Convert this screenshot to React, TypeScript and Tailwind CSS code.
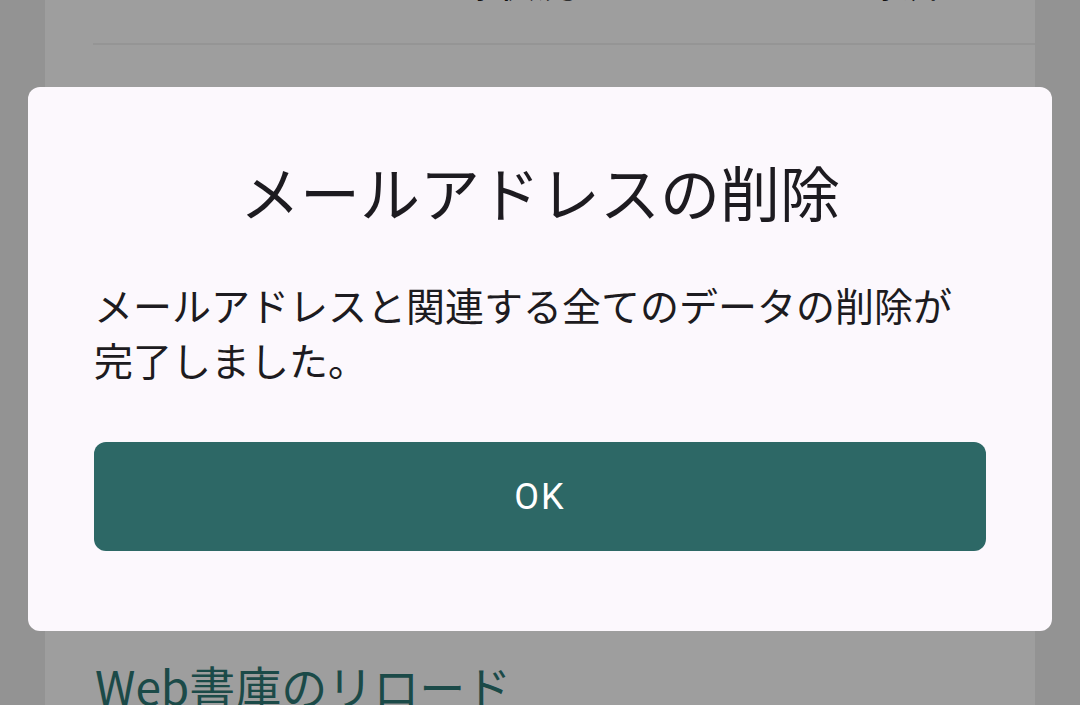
export default function App() {
  return (
    <div
      className="relative h-[705px] w-[1080px] overflow-hidden bg-[#939393]"
      style={{ fontFamily: '"Noto Sans CJK JP", "Noto Sans", sans-serif' }}
    >
      {/* Page behind the scrim */}
      <div className="mx-[45px] flex h-full flex-col bg-[#9e9e9e]">
        <div className="flex h-[4px] shrink-0 items-end justify-between overflow-hidden pl-[50px] pr-[55px]">
          <span className="block translate-y-[1px] text-[40px] leading-[50px] text-[#111]">
            メールアドレスの登録状況
          </span>
          <span className="block translate-y-[1px] text-[40px] leading-[50px] text-[#111]">
            登録済み
          </span>
        </div>
        <div className="ml-[48px] mt-[39px] h-[2px] shrink-0 bg-[#959595]" />
        <div className="mt-[612px] shrink-0 pl-[50px] text-[46px] leading-[56px] text-[#1b4a48]">
          Web書庫のリロード
        </div>
      </div>

      {/* Dialog */}
      <div className="absolute left-[28px] top-[87px] flex h-[544px] w-[1024px] flex-col rounded-[12px] bg-[#fcf8fd] px-[66px] pt-[68px]">
        <h2 className="text-center text-[60px] leading-[72px] text-[#1d1b20]">
          メールアドレスの削除
        </h2>
        <p className="mt-[50px] text-[39px] leading-[55px] text-[#1d1b20]">
          メールアドレスと関連する全てのデータの削除が完了しました。
        </p>
        <button
          className="mt-[55px] flex h-[109px] w-full items-center justify-center rounded-[12px] bg-[#2d6866] text-[36px] tracking-[2px] text-white"
          style={{ fontFamily: 'Roboto, "Noto Sans", sans-serif' }}
        >
          OK
        </button>
      </div>
    </div>
  );
}
